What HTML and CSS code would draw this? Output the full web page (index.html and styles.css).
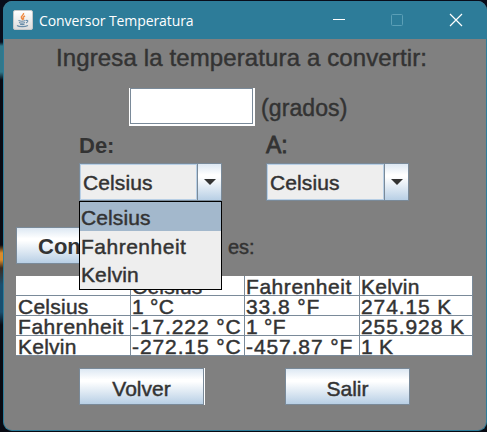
FILE: index.html
```
<!DOCTYPE html>
<html lang="es">
<head>
<meta charset="utf-8">
<title>Conversor Temperatura</title>
<link rel="stylesheet" href="styles.css">
</head>
<body>
<div class="window">
  <header class="titlebar">
    <svg class="java" width="20" height="20" viewBox="0 0 20 20" fill="none">
      <defs><linearGradient id="tile" x2="0" y2="1"><stop stop-color="#fff"/><stop offset="1" stop-color="#dcdcdc"/></linearGradient></defs>
      <rect x=".5" y=".5" width="19" height="19" rx="1.5" fill="url(#tile)" stroke="#c5c8ca"/>
      <path d="M10.500 3c1 2-3.500 3-2 5l1.500 2M12 6c-2 1-2.500 2-1 3.500" stroke="#ef8b45" stroke-width="1.400"/>
      <path d="M5.500 10.500c2 .8 5 .8 7 0M6 12.500c2 .8 4 .8 6 0M7 14.300c1.500.5 3 .5 4.500 0M13 10.500c2.500-.7 2.500 1.500 0 2.500M4 15.500c2 1.500 8 1.500 11 0" stroke="#688ca8" stroke-width="1.100"/>
    </svg>
    <span class="caption">Conversor Temperatura</span>
    <svg class="controls" width="132" height="14" viewBox="0 0 132 14" fill="none">
      <path d="M0 6.500h12" stroke="#fff"/>
      <rect x="58.500" y="1.500" width="11" height="11" rx="1" stroke="#5b9fb6"/>
      <path d="M117 1l12 12M129 1l-12 12" stroke="#fff" stroke-width="1.200"/>
    </svg>
  </header>
  <main class="content">
    <h1 class="heading">Ingresa la temperatura a convertir:</h1>
    <div class="entry"><div class="field"><div class="field-inner"></div></div><span class="units">(grados)</span></div>
    <div class="choices">
      <div class="choice">
        <span class="label from">De:</span>
        <div class="combo"><span class="value">Celsius</span><span class="drop"><svg width="12" height="6"><path d="M0 0h12L6 6z" fill="#333"/></svg></span></div>
        <ul class="popup"><li class="selected">Celsius</li><li class="fahr">Fahrenheit</li><li class="kelv">Kelvin</li></ul>
      </div>
      <div class="choice">
        <span class="label to">A:</span>
        <div class="combo"><span class="value">Celsius</span><span class="drop"><svg width="12" height="6"><path d="M0 0h12L6 6z" fill="#333"/></svg></span></div>
      </div>
    </div>
    <div class="result"><div class="button convert">Convertir</div><span class="equals">es:</span></div>
    <div class="table">
      <span></span><span>Celsius</span><span class="w-f">Fahrenheit</span><span>Kelvin</span>
      <span class="first">Celsius</span><span>1 °C</span><span class="num">33.8 °F</span><span class="num">274.15 K</span>
      <span class="first w-f">Fahrenheit</span><span class="num">-17.222 °C</span><span>1 °F</span><span class="num">255.928 K</span>
      <span class="first">Kelvin</span><span class="num">-272.15 °C</span><span class="num">-457.87 °F</span><span>1 K</span>
    </div>
    <div class="actions"><div class="button back">Volver</div><div class="button">Salir</div></div>
  </main>
</div>
</body>
</html>
```
FILE: styles.css
```
* { box-sizing: border-box; }
body {
  margin: 0;
  width: 487px;
  height: 432px;
  padding: 1px 0 1px 3px;
  overflow: hidden;
  background: linear-gradient(#080d1b 0 42px, #31788b 46px 72px, #090b14 80px 245px, #d98b2b 253px 260px, #3b2a1e 268px, #194f70 285px 312px, #080a12 325px);
  font-family: "Liberation Sans", sans-serif;
  color: #333;
}
.window {
  width: 484px;
  height: 430px;
  border: 1px solid #2d7c99;
  border-top: 0;
  border-radius: 9px;
  overflow: hidden;
  background: #808080;
}
.titlebar {
  height: 38px;
  display: flex;
  align-items: center;
  padding-left: 9px;
  background: #2d7c99;
}
.caption {
  margin-left: 6px;
  color: #fff;
  font: 14px "Open Sans", "Noto Sans", sans-serif;
  letter-spacing: -0.09px;
}
.controls { margin-left: auto; margin-right: 21px; }
.content {
  height: 391px;
  -webkit-text-stroke: 0.45px #333;
}
.heading {
  margin: 0;
  padding: 3px 0 0 52px;
  height: 49px;
  font-size: 24px;
  line-height: 32px;
  font-weight: 400;
  letter-spacing: 0.12px;
  white-space: nowrap;
}
.entry { display: flex; height: 39px; padding-left: 125px; }
.field {
  width: 126px;
  height: 38px;
  background: #fff;
  padding: 0 2px 2px 1px;
}
.field-inner { height: 36px; border: 1px solid #7a8a99; }
.units { margin-left: 6px; line-height: 40px; font-size: 23px; letter-spacing: 0.1px; }
.choices { display: flex; gap: 44px; padding-left: 75px; height: 100px; }
.choice { position: relative; width: 143px; }
.label { display: block; height: 36px; font-size: 23px; line-height: 37px; }
.from { font-weight: 700; font-size: 22px; -webkit-text-stroke: 0; }
.to { -webkit-text-stroke: 0.8px #333; }
.combo {
  display: flex;
  width: 143px;
  height: 38px;
  border: 1px solid #7a8a99;
}
.value {
  width: 117px;
  border: 1px solid #b8cfe5;
  box-shadow: inset 0 0 0 1px #eee;
  background: #eee;
  padding-left: 2px;
  line-height: 36px;
  font-size: 21px;
  letter-spacing: 0.1px;
}
.drop {
  flex: 1;
  display: flex;
  align-items: center;
  justify-content: center;
  border-left: 1px solid #7a8a99;
}
.drop, .button { background: linear-gradient(#dde8f3, #fff 30%, #fff 36%, #b8cfe5); }
.popup {
  position: absolute;
  z-index: 2;
  top: 74px;
  left: 0;
  width: 143px;
  height: 89px;
  margin: 0;
  padding: 0;
  list-style: none;
  border: 1px solid #000;
  background: #eee;
  font-size: 21px;
  line-height: 26px;
}
.popup li { height: 29px; padding: 3px 0 0 1px; letter-spacing: 0.1px; }
.popup .fahr { letter-spacing: 0.5px; }
.popup .kelv { padding-top: 2px; }
.popup .selected { background: #a3b8cc; }
.button {
  width: 125px;
  height: 37px;
  border: 1px solid #7a8a99;
  text-align: center;
  line-height: 39px;
  font-size: 21px;
}
.result { display: flex; height: 49px; padding-left: 12px; }
.convert {
  text-align: left;
  padding-left: 21px;
  line-height: 37px;
  font-size: 22px;
  font-weight: 700;
  -webkit-text-stroke: 0;
}
.equals { margin-left: 87px; line-height: 40px; font-size: 20px; }
.table {
  display: grid;
  grid-template-columns: 115px 114px 115px 113px;
  grid-template-rows: repeat(4, 20px);
  width: 457px;
  margin-left: 12px;
  background: #fff;
  font-size: 21px;
  line-height: 22px;
  letter-spacing: 0.25px;
  white-space: nowrap;
}
.table span {
  border-right: 1px solid #7a8a99;
  border-bottom: 1px solid #7a8a99;
  padding-left: 1px;
}
.table .first { padding-left: 2px; }
.table .w-f { letter-spacing: 0.55px; }
.table .num { letter-spacing: 0.9px; }
.actions { display: flex; gap: 81px; padding: 12px 0 0 75px; }
.back { box-shadow: 1px 0 #fff; }
```
